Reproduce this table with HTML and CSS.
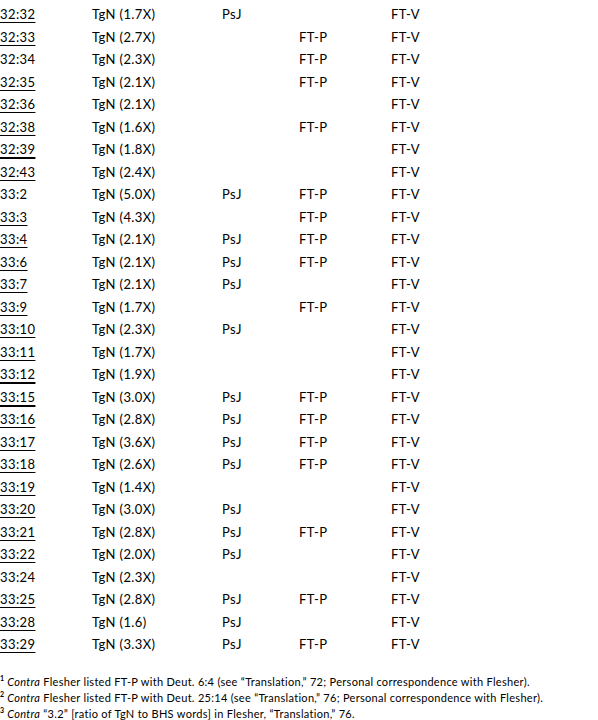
FILE: index.html
```html
<!DOCTYPE html>
<html>
<head>
<meta charset="utf-8">
<link rel="stylesheet" href="styles.css">
</head>
<body>
<table class="grid">
<tr><td><span class="u">32:32</span></td><td>TgN (1.7X)</td><td>PsJ</td><td></td><td>FT-V</td></tr>
<tr><td><span class="u">32:33</span></td><td>TgN (2.7X)</td><td></td><td>FT-P</td><td>FT-V</td></tr>
<tr><td>32:34</td><td>TgN (2.3X)</td><td></td><td>FT-P</td><td>FT-V</td></tr>
<tr><td><span class="u">32:35</span></td><td>TgN (2.1X)</td><td></td><td>FT-P</td><td>FT-V</td></tr>
<tr><td><span class="u">32:36</span></td><td>TgN (2.1X)</td><td></td><td></td><td>FT-V</td></tr>
<tr><td><span class="u">32:38</span></td><td>TgN (1.6X)</td><td></td><td>FT-P</td><td>FT-V</td></tr>
<tr><td><span class="u thick">32:39</span></td><td>TgN (1.8X)</td><td></td><td></td><td>FT-V</td></tr>
<tr><td><span class="u">32:43</span></td><td>TgN (2.4X)</td><td></td><td></td><td>FT-V</td></tr>
<tr><td>33:2</td><td>TgN (5.0X)</td><td>PsJ</td><td>FT-P</td><td>FT-V</td></tr>
<tr><td><span class="u">33:3</span></td><td>TgN (4.3X)</td><td></td><td>FT-P</td><td>FT-V</td></tr>
<tr><td><span class="u">33:4</span></td><td>TgN (2.1X)</td><td>PsJ</td><td>FT-P</td><td>FT-V</td></tr>
<tr><td><span class="u">33:6</span></td><td>TgN (2.1X)</td><td>PsJ</td><td>FT-P</td><td>FT-V</td></tr>
<tr><td><span class="u">33:7</span></td><td>TgN (2.1X)</td><td>PsJ</td><td></td><td>FT-V</td></tr>
<tr><td><span class="u">33:9</span></td><td>TgN (1.7X)</td><td></td><td>FT-P</td><td>FT-V</td></tr>
<tr><td><span class="u">33:10</span></td><td>TgN (2.3X)</td><td>PsJ</td><td></td><td>FT-V</td></tr>
<tr><td><span class="u">33:11</span></td><td>TgN (1.7X)</td><td></td><td></td><td>FT-V</td></tr>
<tr><td><span class="u thick">33:12</span></td><td>TgN (1.9X)</td><td></td><td></td><td>FT-V</td></tr>
<tr><td><span class="u thick">33:15</span></td><td>TgN (3.0X)</td><td>PsJ</td><td>FT-P</td><td>FT-V</td></tr>
<tr><td><span class="u">33:16</span></td><td>TgN (2.8X)</td><td>PsJ</td><td>FT-P</td><td>FT-V</td></tr>
<tr><td><span class="u">33:17</span></td><td>TgN (3.6X)</td><td>PsJ</td><td>FT-P</td><td>FT-V</td></tr>
<tr><td><span class="u">33:18</span></td><td>TgN (2.6X)</td><td>PsJ</td><td>FT-P</td><td>FT-V</td></tr>
<tr><td><span class="u">33:19</span></td><td>TgN (1.4X)</td><td></td><td></td><td>FT-V</td></tr>
<tr><td><span class="u">33:20</span></td><td>TgN (3.0X)</td><td>PsJ</td><td></td><td>FT-V</td></tr>
<tr><td><span class="u">33:21</span></td><td>TgN (2.8X)</td><td>PsJ</td><td>FT-P</td><td>FT-V</td></tr>
<tr><td><span class="u">33:22</span></td><td>TgN (2.0X)</td><td>PsJ</td><td></td><td>FT-V</td></tr>
<tr><td>33:24</td><td>TgN (2.3X)</td><td></td><td></td><td>FT-V</td></tr>
<tr><td><span class="u">33:25</span></td><td>TgN (2.8X)</td><td>PsJ</td><td>FT-P</td><td>FT-V</td></tr>
<tr><td><span class="u">33:28</span></td><td>TgN (1.6)</td><td>PsJ</td><td></td><td>FT-V</td></tr>
<tr><td><span class="u">33:29</span></td><td>TgN (3.3X)</td><td>PsJ</td><td>FT-P</td><td>FT-V</td></tr>
</table>
<div class="notes">
<p><sup>1</sup> <i>Contra</i> Flesher listed FT-P with Deut. 6:4 (see “Translation,” 72; Personal correspondence with Flesher).</p>
<p><sup>2</sup> <i>Contra</i> Flesher listed FT-P with Deut. 25:14 (see “Translation,” 76; Personal correspondence with Flesher).</p>
<p><sup>3</sup> <i>Contra</i> “3.2” [ratio of TgN to BHS words] in Flesher, “Translation,” 76.</p>
</div>
</body>
</html>
```
FILE: styles.css
```css
html, body {
  margin: 0;
  padding: 0;
  background: #fff;
  color: #000;
  font-family: Lato, "Liberation Sans", sans-serif;
}
body {
  padding-top: 3px;
}
.grid {
  border-collapse: collapse;
  table-layout: fixed;
  width: 470px;
  font-size: 13px;
  letter-spacing: 0.4px;
}
.grid td {
  padding: 0;
  height: 22.5px;
  vertical-align: middle;
  white-space: nowrap;
}
.grid td:nth-child(1) { width: 92px; }
.grid td:nth-child(2) { width: 130px; }
.grid td:nth-child(3) { width: 77px; }
.grid td:nth-child(4) { width: 92px; }
.u {
  text-decoration: underline;
  text-underline-offset: 3px;
}
.u.thick {
  text-decoration-thickness: 2px;
}
.notes {
  margin-top: 18px;
  font-size: 11px;
  line-height: 16px;
  letter-spacing: 0.3px;
  white-space: nowrap;
}
.notes p {
  margin: 0;
}
.notes sup {
  font-size: 7px;
  font-weight: bold;
  line-height: 0;
  vertical-align: 5px;
  letter-spacing: 0;
}
```
